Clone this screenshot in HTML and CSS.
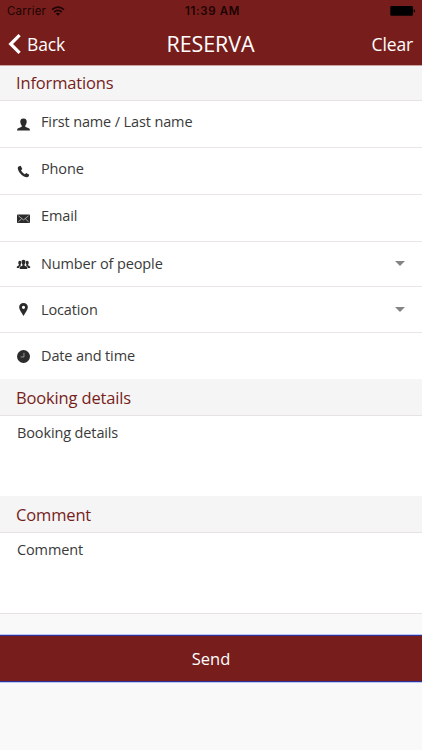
FILE: index.html
```html
<!DOCTYPE html>
<html lang="en">
<head>
<meta charset="utf-8">
<title>Reserva</title>
<link rel="stylesheet" href="styles.css">
</head>
<body>
<header class="top">
  <div class="status">
    <div class="carrier"><span>Carrier</span>
      <svg width="14" height="10" viewBox="0 0 14 10" fill="none" stroke="#1d0303" stroke-width="1.7"><path d="M1 3.7Q7-1.3 13 3.7M3.2 6Q7 2.8 10.8 6"/><path d="M4.8 7.5Q7 5.8 9.2 7.5L7 9.7Z" fill="#1d0303" stroke="none"/></svg>
    </div>
    <div class="time">11:39 AM</div>
    <svg class="battery" width="26" height="10" viewBox="0 0 26 10"><rect x="0.3" width="22.6" height="9.7" rx="1.3"/><path d="M23.7 3.2q1.4.2 1.4 1.7t-1.4 1.7z"/></svg>
  </div>
  <nav class="nav">
    <div class="back"><svg width="14" height="20" viewBox="0 0 14 20" fill="none" stroke="#fff" stroke-width="3.2"><path d="M11.6 1.2 2.7 10l8.9 8.8"/></svg><span>Back</span></div>
    <h1>RESERVA</h1>
    <div class="clear">Clear</div>
  </nav>
</header>
<main>
  <h2>Informations</h2>
  <div class="row input"><svg viewBox="0 0 14 14"><path d="M7 .5c2.600 0 3.700 1.700 3.400 4-.2 1.700-.9 2.800-1.500 3.600v1.300c1.300 1 3.800 1.100 4.600 2.200.3.500.4 1 .4 1.900H.1c0-.9.1-1.400.4-1.900.8-1.100 3.300-1.200 4.600-2.200V8.100C4.500 7.300 3.800 6.200 3.600 4.500 3.300 2.200 4.400.5 7 .5z"/></svg><span>First name / Last name</span></div>
  <div class="row input"><svg viewBox="0 0 14 14"><path d="M1.800 1.600 4 .9 5.700 4.300 4.300 5.600C5.300 7.500 6.600 8.800 8.500 9.900L9.900 8.500 13.200 10.500 12.500 12.500C11.400 13.800 9.500 13.400 7.500 12.400 4.100 10.500 1.500 7.400.9 4.100.7 2.900 1 2 1.800 1.600z"/></svg><span>Phone</span></div>
  <div class="row input"><svg viewBox="0 0 14 14"><rect x="0" y="2.600" width="14" height="9.200" rx=".9"/><path d="M1.500 4.100 7 8.500l5.500-4.400M1.500 10.500 5.100 7.200M12.500 10.500 8.900 7.200" fill="none" stroke="#ccc" stroke-width=".8"/></svg><span>Email</span></div>
  <div class="row people"><svg viewBox="0 0 14 14"><path d="M7 1.800c1.700 0 2.300 1.100 2.100 2.700-.1 1.200-.6 2-1 2.500v1c.7.700 2.500.8 2.800 1.800l.2 2H2.900l.2-2C3.400 8.800 5.200 8.700 5.900 8V7c-.4-.5-.9-1.300-1-2.500C4.700 2.900 5.300 1.800 7 1.800z"/><path d="M3 3c1.200 0 1.600 1 1.500 2.300-.1.900-.4 1.500-.7 1.900v.7l.5.500C3 8.900 2.500 9.400 2.400 10.800H-.3c0-2 .9-2.100 2.400-2.900v-.7C1.800 6.800 1.500 6.200 1.400 5.300 1.300 4.200 1.800 3 3 3zM11 3c-1.200 0-1.600 1-1.500 2.300.1.900.4 1.500.7 1.900v.7l-.5.500c1.300.5 1.800 1 1.900 2.400h2.700c0-2-.9-2.100-2.400-2.900v-.7c.3-.4.6-1 .7-1.900C12.700 4.200 12.200 3 11 3z"/></svg><span>Number of people</span><i class="caret"></i></div>
  <div class="row place"><svg viewBox="0 0 14 14"><path fill-rule="evenodd" d="M7 0c2.800 0 4.700 1.900 4.700 4.600C11.700 7.400 8.600 10.800 7 14 5.400 10.800 2.300 7.400 2.300 4.600 2.300 1.900 4.200 0 7 0zM7 3a1.700 1.700 0 1 0 0 3.400A1.700 1.700 0 0 0 7 3z"/></svg><span>Location</span><i class="caret"></i></div>
  <div class="row date"><svg viewBox="0 0 14 14"><circle cx="7" cy="7" r="7"/><path d="M7.500 3v4.500H4" fill="none" stroke="#aaa" stroke-width=".9"/></svg><span>Date and time</span></div>
  <h2 class="sub">Booking details</h2>
  <div class="area">Booking details</div>
  <h2 class="sub">Comment</h2>
  <div class="area last">Comment</div>
</main>
<button class="send">Send</button>
</body>
</html>
```
FILE: styles.css
```css
* { box-sizing: border-box; }
body { margin: 0; height: 750px; overflow: hidden; background: #f9f9f9; color: #3a3a3a; font-family: "Open Sans", sans-serif; }
svg { display: block; flex: none; overflow: visible; }
.top { height: 66px; background: #771e1c; border-bottom: 1px solid #c9a3a2; color: #fff; }
.status { display: grid; grid-template-columns: 1fr auto 1fr; height: 22px; padding: 0 6px 0 7px; align-items: center; color: #1d0303; font-family: Inter, sans-serif; font-size: 11.5px; line-height: 22px; }
.carrier { display: flex; align-items: center; gap: 5px; letter-spacing: .2px; }
.time { position: relative; left: 1px; font-weight: 600; letter-spacing: .65px; }
.battery { justify-self: end; fill: #000; }
.nav { display: grid; grid-template-columns: 1fr auto 1fr; height: 43px; padding: 0 9px 0 8px; align-items: center; font-size: 17.5px; letter-spacing: -.15px; }
.back { display: flex; align-items: center; gap: 5px; }
.nav h1 { margin: 0; font-size: 21.5px; line-height: 30px; font-weight: 400; letter-spacing: -.1px; }
.clear { justify-self: end; }
h2 { height: 35px; margin: 0; padding-left: 16px; border-bottom: 1px solid #e8e3e3; background: #f5f5f5; color: #771e1c; font-size: 16.5px; font-weight: 400; line-height: 34px; letter-spacing: -.15px; }
.sub { height: 37px; line-height: 37px; }
.row { display: flex; align-items: center; gap: 11px; padding: 0 17px; border-bottom: 1px solid #ebe5e6; background: #fff; font-size: 14.5px; line-height: 20px; letter-spacing: -.13px; }
.row svg { width: 13px; height: 13px; fill: #2b2b2b; }
.input { height: 47px; align-items: flex-start; padding-top: 11px; }
.input svg { margin-top: 6px; }
.people { height: 45px; }
.place { height: 46px; }
.date { height: 46px; border-bottom: 0; }
.caret { margin-left: auto; border: solid transparent; border-width: 5px 5px 0; border-top-color: #858585; }
.people .caret { position: relative; top: -1px; }
.area { height: 80px; padding: 7px 17px; background: #fff; font-size: 14.5px; line-height: 20px; letter-spacing: -.13px; }
.last { height: 81px; border-bottom: 1px solid #e6e2e2; }
.send { display: block; width: 100%; height: 47px; margin: 21px 0 0; padding: 0; border: solid #30309a; border-width: 1px 0; box-shadow: 0 0 0 1px #b8c9f5; background: #771e1c; color: #fff; font: 16.5px/45px "Open Sans", sans-serif; }
```
